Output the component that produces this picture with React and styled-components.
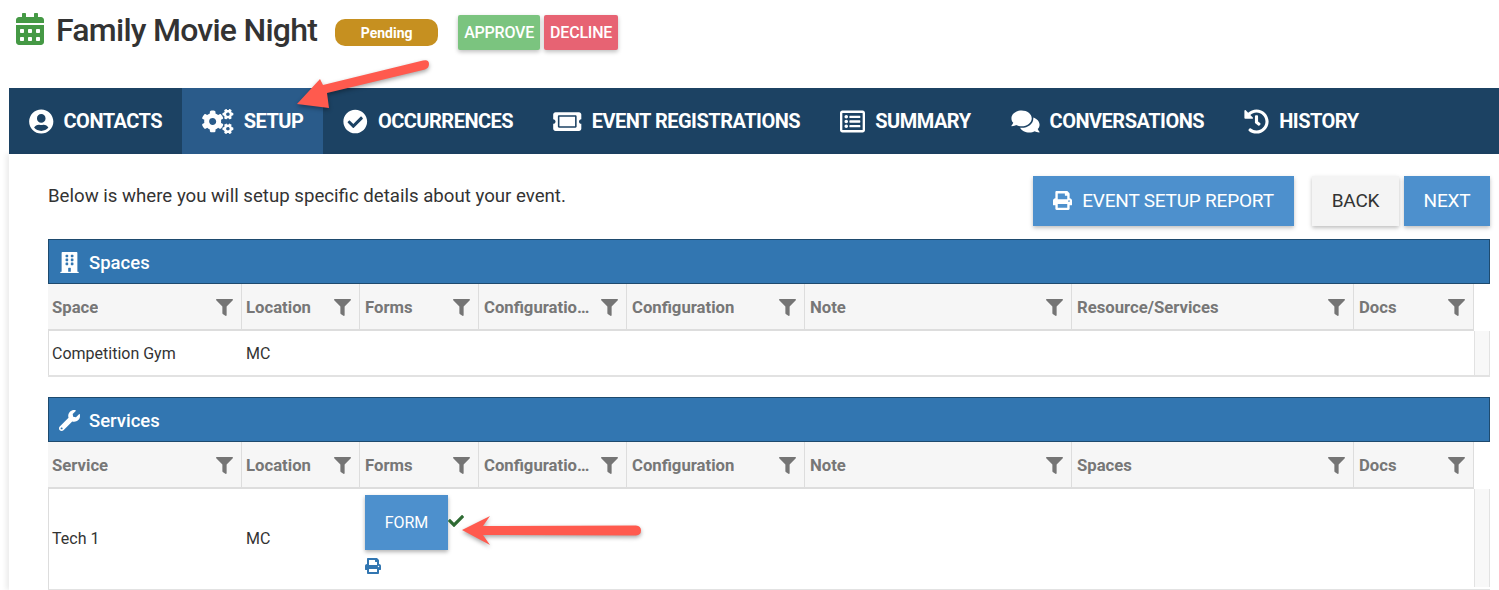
import React from 'react';
import styled, { createGlobalStyle } from 'styled-components';
import {
    FaCalendarAlt, FaUserCircle, FaCogs, FaCheckCircle, FaTicketAlt, FaRegListAlt,
    FaComments, FaHistory, FaPrint, FaBuilding, FaWrench, FaFilter, FaCheck
} from 'react-icons/fa';

const GlobalStyle = createGlobalStyle`
    html, body {
        margin : 0;
        padding : 0;
        background : #fff;
        font-family : Roboto, 'Liberation Sans', sans-serif;
        overflow : hidden;
    }
`;

const Page = styled.div`
    position : relative;
    width : 1499px;
    height : 590px;
    overflow : hidden;
`;

const TitleBar = styled.div`
    display : flex;
    align-items : flex-start;
    height : 88px;
    padding : 15px 0 0 16px;
    box-sizing : border-box;
`;

const CalendarIcon = styled(FaCalendarAlt)`
    width : 28px;
    height : 32px;
    color : #459945;
    margin-top : -2px;
`;

const Title = styled.h1`
    margin : -1px 0 0 12px;
    font-size : 32px;
    line-height : 32px;
    font-weight : 500;
    letter-spacing : -0.75px;
    color : #333;
`;

const Badge = styled.span`
    display : flex;
    align-items : center;
    justify-content : center;
    width : 103px;
    height : 27px;
    margin : 4px 0 0 18px;
    border-radius : 10px;
    background : #c69020;
    color : #fff;
    font-size : 14px;
    font-weight : 700;
`;

const ActionRow = styled.div`
    display : flex;
    gap : 4px;
    margin-left : 20px;
`;

const ActionButton = styled.button`
    height : 35px;
    width : ${(p) => p.$width}px;
    padding : 0;
    border : none;
    border-radius : 2px;
    background : ${(p) => p.$bg};
    color : #fff;
    font-family : inherit;
    font-size : 16px;
    font-weight : 500;
    letter-spacing : -0.2px;
    box-shadow : 0 2px 4px rgba(0, 0, 0, 0.25);
`;

const Nav = styled.nav`
    display : flex;
    height : 66px;
    margin-left : 9px;
    background : #1c4263;
`;

const NavItem = styled.div`
    display : flex;
    align-items : center;
    gap : 10px;
    padding : 0 20px;
    background : ${(p) => (p.$active ? '#2a5b8a' : 'transparent')};
    color : #fff;
    font-size : 20px;
    font-weight : 700;
    letter-spacing : -0.5px;

    svg {
        height : 25px;
        width : ${(p) => p.$iconWidth}px;
    }
`;

const Content = styled.main`
    margin-left : 9px;
    padding : 22px 9px 0 39px;
    box-shadow : -3px 0 5px rgba(0, 0, 0, 0.08);
    height : 436px;
    box-sizing : border-box;
`;

const IntroRow = styled.div`
    display : flex;
    justify-content : space-between;
    align-items : flex-start;
    height : 63px;
`;

const Intro = styled.p`
    margin : 9px 0 0 0;
    font-size : 18.65px;
    line-height : 22px;
    color : #333;
`;

const ReportRow = styled.div`
    display : flex;
    gap : 5px;
`;

const PageButton = styled.button`
    display : flex;
    align-items : center;
    justify-content : center;
    gap : 10px;
    height : 50px;
    width : ${(p) => p.$width}px;
    margin-right : ${(p) => p.$gap || 0}px;
    padding : 0 0 2px 0;
    border : none;
    background : ${(p) => (p.$light ? '#f4f4f4' : '#4d90cd')};
    color : ${(p) => (p.$light ? '#333' : '#fff')};
    font-family : inherit;
    font-size : 19px;
    letter-spacing : -0.2px;
    box-shadow : 0 2px 4px rgba(0, 0, 0, 0.25);

    svg {
        width : 19px;
        height : 19px;
    }
`;

const Panel = styled.section`
    margin-bottom : 20px;
`;

const PanelHeading = styled.div`
    display : flex;
    align-items : center;
    gap : 9px;
    height : 45px;
    padding : 2px 0 0 10px;
    box-sizing : border-box;
    background : #3276b1;
    border : 1px solid #1e4a6e;
    color : #fff;
    font-size : 18.5px;
    font-weight : 500;

    svg {
        width : 21px;
        height : 21px;
    }
`;

const COLUMNS = '194px 118px 119px 148px 178px 267px 282px 120px 16px';

const HeadRow = styled.div`
    display : grid;
    grid-template-columns : ${COLUMNS};
    height : 47px;
    box-sizing : border-box;
`;

const HeadCell = styled.div`
    display : flex;
    align-items : center;
    justify-content : space-between;
    padding : 2px 8px 0 4px;
    background : #f6f6f6;
    border-right : 1px solid #ddd;
    border-bottom : 2px solid #ddd;
    color : #777;
    font-size : 16.7px;
    font-weight : 700;
    min-width : 0;

    &:nth-child(n + 3) {
        padding-left : 5px;
    }

    span {
        white-space : nowrap;
        overflow : hidden;
        text-overflow : ellipsis;
    }

    svg {
        flex : none;
        width : 17px;
        height : 17px;
        margin-left : 6px;
        color : #757575;
    }
`;

const HeadGap = styled.div`
    background : #fff;
`;

const BodyRow = styled.div`
    display : grid;
    grid-template-columns : ${COLUMNS};
    height : ${(p) => (p.$tall ? 102 : 46)}px;
    padding-bottom : ${(p) => (p.$tall ? 2 : 0)}px;
    box-sizing : border-box;
    box-shadow : inset 1px 0 0 #ddd;
    border-bottom : 2px solid #e2e2e2;
`;

const BodyCell = styled.div`
    display : flex;
    align-items : center;
    padding-left : 4px;
    color : #333;
    font-size : 16px;
`;

const ScrollCell = styled.div`
    background : #f8f8f8;
    border-left : 1px solid #e2e2e2;
    border-right : 1px solid #e2e2e2;
`;

const FormCell = styled.div`
    padding : 6px 0 0 5px;
`;

const FormLine = styled.div`
    display : flex;
    align-items : flex-start;
`;

const FormButton = styled.button`
    width : 83px;
    height : 55px;
    padding : 0;
    border : none;
    background : #4d90cd;
    color : #fff;
    font-family : inherit;
    font-size : 16px;
    box-shadow : 0 2px 4px rgba(0, 0, 0, 0.3);
`;

const DoneIcon = styled(FaCheck)`
    width : 16px;
    height : 16px;
    margin : 18px 0 0 0;
    color : #2f6b33;
`;

const FormPrint = styled(FaPrint)`
    display : block;
    width : 16px;
    height : 16px;
    margin-top : 8px;
    color : #3276b1;
`;

const Arrow = styled.svg`
    position : absolute;
    left : 0;
    top : 0;
    pointer-events : none;
    filter : drop-shadow(0 2px 2px rgba(0, 0, 0, 0.35));
`;

const TABS = [
    { label : 'CONTACTS', icon : FaUserCircle, width : 24.5 },
    { label : 'SETUP', icon : FaCogs, width : 31.5, active : true },
    { label : 'OCCURRENCES', icon : FaCheckCircle, width : 24.5 },
    { label : 'EVENT REGISTRATIONS', icon : FaTicketAlt, width : 28.5 },
    { label : 'SUMMARY', icon : FaRegListAlt, width : 25 },
    { label : 'CONVERSATIONS', icon : FaComments, width : 29 },
    { label : 'HISTORY', icon : FaHistory, width : 25 }
];

const TableHead = ({ columns }) => (
    <HeadRow>
        {columns.map((name, i) => (
            <HeadCell key = {i}>
                <span>{name}</span>
                <FaFilter />
            </HeadCell>
        ))}
        <HeadGap />
    </HeadRow>
);

const App = () => (
    <Page>
        <GlobalStyle />
        <TitleBar>
            <CalendarIcon />
            <Title>Family Movie Night</Title>
            <Badge>Pending</Badge>
            <ActionRow>
                <ActionButton $width = {82} $bg = "#7bc47f">APPROVE</ActionButton>
                <ActionButton $width = {74} $bg = "#e76373">DECLINE</ActionButton>
            </ActionRow>
        </TitleBar>

        <Nav>
            {TABS.map(({ label, icon : Icon, width, active }) => (
                <NavItem key = {label} $active = {active} $iconWidth = {width}>
                    <Icon />
                    {label}
                </NavItem>
            ))}
        </Nav>

        <Content>
            <IntroRow>
                <Intro>Below is where you will setup specific details about your event.</Intro>
                <ReportRow>
                    <PageButton $width = {261} $gap = {13}><FaPrint />EVENT SETUP REPORT</PageButton>
                    <PageButton $width = {87} $light>BACK</PageButton>
                    <PageButton $width = {86}>NEXT</PageButton>
                </ReportRow>
            </IntroRow>

            <Panel>
                <PanelHeading><FaBuilding />Spaces</PanelHeading>
                <TableHead columns = {['Space', 'Location', 'Forms', 'Configuration Type', 'Configuration', 'Note', 'Resource/Services', 'Docs']} />
                <BodyRow>
                    <BodyCell>Competition Gym</BodyCell>
                    <BodyCell>MC</BodyCell>
                    <BodyCell /><BodyCell /><BodyCell /><BodyCell /><BodyCell /><BodyCell />
                    <ScrollCell />
                </BodyRow>
            </Panel>

            <Panel>
                <PanelHeading><FaWrench />Services</PanelHeading>
                <TableHead columns = {['Service', 'Location', 'Forms', 'Configuration Type', 'Configuration', 'Note', 'Spaces', 'Docs']} />
                <BodyRow $tall>
                    <BodyCell>Tech 1</BodyCell>
                    <BodyCell>MC</BodyCell>
                    <FormCell>
                        <FormLine>
                            <FormButton>FORM</FormButton>
                            <DoneIcon />
                        </FormLine>
                        <FormPrint />
                    </FormCell>
                    <BodyCell /><BodyCell /><BodyCell /><BodyCell /><BodyCell />
                    <ScrollCell />
                </BodyRow>
            </Panel>
        </Content>

        <Arrow width = "1499" height = "590" viewBox = "0 0 1499 590">
            <path
                d = "M423 60.5 Q429 59 429 64 Q429 68 425 69.5 L327 93 L329 108 L297 104 L320 79 L323 85 Z"
                fill = "#ff5a4e"
            />
            <path
                d = "M462 530 L490 516 L483 526 L636 525.5 Q641 526 641 530.5 Q641 535 636 535.5 L483 535 L490 545 Z"
                fill = "#ff5a4e"
            />
        </Arrow>
    </Page>
);

export default App;
